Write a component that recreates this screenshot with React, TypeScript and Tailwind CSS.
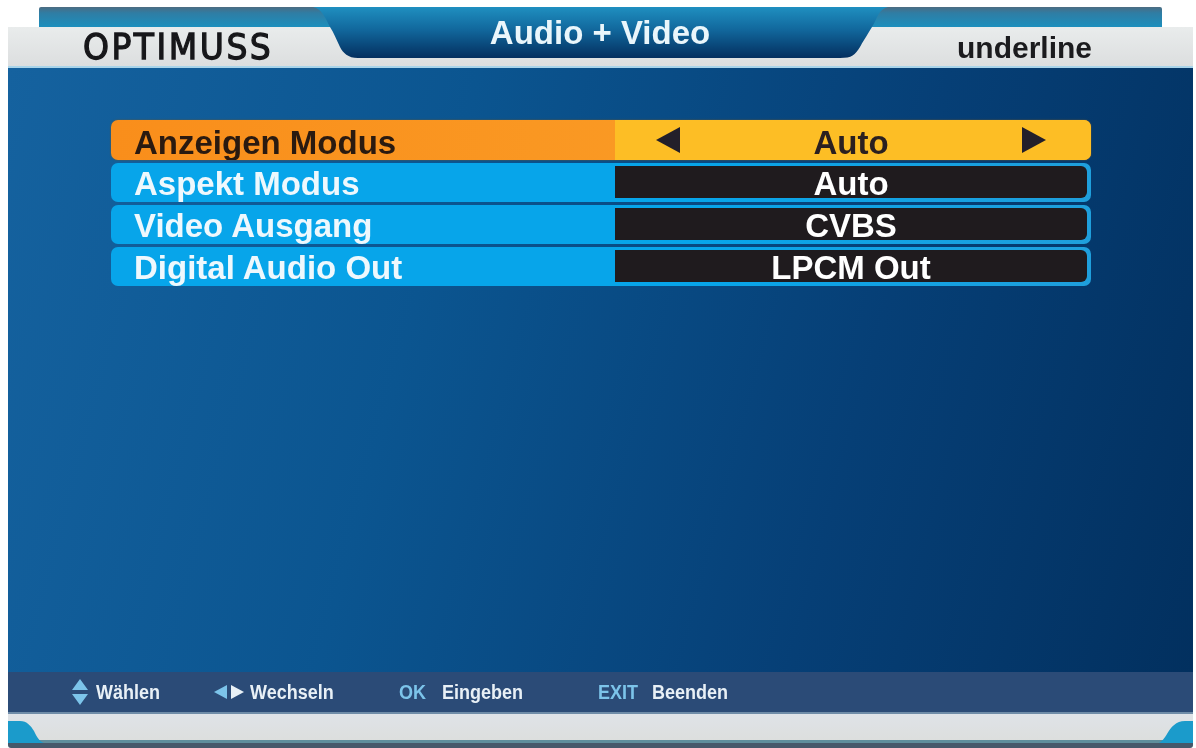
const rows = [
  { label: 'Anzeigen Modus', value: 'Auto', active: true },
  { label: 'Aspekt Modus', value: 'Auto', active: false },
  { label: 'Video Ausgang', value: 'CVBS', active: false },
  { label: 'Digital Audio Out', value: 'LPCM Out', active: false }
]

const MenuRow = ({ label, value, active }: { label: string; value: string; active: boolean }) => {
  if (active) {
    return (
      <div className="flex h-[40px] rounded-[7px] overflow-hidden bg-[linear-gradient(90deg,#f98e1b,#fba32b)] shadow-[0_0_2px_#6b5a30]">
        <div className="w-[504px] pl-[23px] pt-[5px] text-[33px] leading-[36px] font-bold text-[#2a1a10]">{label}</div>
        <div className="flex flex-1 items-center justify-between pl-[41px] pr-[45px] bg-[#fdbe25] text-[#2a2020]">
          <svg width="24" height="26" viewBox="0 0 24 26">
            <path d="M0 13 L24 0 V26 Z" fill="#231f2a" />
          </svg>
          <span className="text-[33px] leading-[36px] font-bold pt-[5px]">{value}</span>
          <svg width="24" height="26" viewBox="0 0 24 26">
            <path d="M24 13 L0 0 V26 Z" fill="#231f2a" />
          </svg>
        </div>
      </div>
    )
  }
  return (
    <div className="flex h-[39px] rounded-[7px] bg-[linear-gradient(90deg,#07a5ea_0%,#07a5ea_60%,#1f9fdc_100%)] overflow-hidden">
      <div className="w-[504px] pl-[23px] pt-[3px] text-[33px] leading-[36px] font-bold text-[#eef8fd]">{label}</div>
      <div className="flex flex-1 mt-[3px] mb-[4px] mr-[4px] rounded-r-[6px] bg-[#1f1b1e] items-center justify-center text-white">
        <span className="text-[33px] leading-[36px] font-bold pt-[4px]">{value}</span>
      </div>
    </div>
  )
}

export default function App() {
  return (
    <div className="w-[1196px] h-[748px] bg-white overflow-hidden pt-[7px] flex flex-col font-['Liberation_Sans',Arial,sans-serif] blur-[0.4px]">
      {/* header */}
      <div className="relative h-[61px] shrink-0">
        <div className="ml-[39px] mr-[34px] h-[20px] rounded-t-[2px] bg-[linear-gradient(180deg,#4c6c82_0%,#2f7da4_30%,#1c8fbd_100%)]" />
        <div className="ml-[8px] mr-[3px] h-[41px] flex justify-between items-center border-b-2 border-[#a9d4ea] bg-[linear-gradient(180deg,#e9ecec,#dcdedf)]">
          <div className="pl-[75px] text-[33px] leading-[36px] tracking-[2.5px] text-[#17171a] font-['DejaVu_Sans',sans-serif] [-webkit-text-stroke:1.2px_#17171a] [transform:scaleY(1.05)]">OPTIMUSS</div>
          <div className="pr-[101px] pt-[3px] text-[30px] leading-[30px] font-bold text-[#1b1b1e]">underline</div>
        </div>
        <div className="absolute left-[300px] top-0 w-[590px] h-[54px]">
          <svg className="absolute inset-0" width="590" height="54" viewBox="0 0 590 54">
            <defs>
              <linearGradient id="tab" x1="0" y1="0" x2="0" y2="1">
                <stop offset="0" stopColor="#1f8fc0" />
                <stop offset="0.45" stopColor="#11679c" />
                <stop offset="1" stopColor="#042f5f" />
              </linearGradient>
            </defs>
            <path d="M13 0 H588 C578 3 578 10 572 20 C566 30 562 36 560 40 C555 48 552 51 540 51 H58 C48 51 43 46 40 40 C36 32 34 26 30 20 C26 12 22 2 13 0 Z" fill="url(#tab)" />
          </svg>
          <div className="relative text-center pt-[9px] pl-[10px] text-[33px] leading-[34px] font-bold text-[#eaf6fb]">Audio + Video</div>
        </div>
      </div>

      {/* menu area */}
      <div className="ml-[8px] mr-[3px] h-[604px] shrink-0 pt-[52px] pl-[103px] pr-[102px] flex flex-col gap-[3px] bg-[linear-gradient(105deg,#15629f_0%,#0b5590_35%,#063f76_70%,#02305f_100%)]">
        {rows.map((row) => (
          <MenuRow key={row.label} label={row.label} value={row.value} active={row.active} />
        ))}
      </div>

      {/* footer hints */}
      <div className="ml-[8px] mr-[3px] h-[42px] shrink-0 flex items-center pl-[64px] bg-[#2b4b77] border-b-2 border-[#6f8ca8] text-[20px] font-bold text-[#e8f0f6]">
        <svg width="16" height="28" viewBox="0 0 16 28" className="mr-[8px]">
          <path d="M8 1 L16 12 H0 Z M8 27 L16 16 H0 Z" fill="#7cc4ea" />
        </svg>
        <span className="w-[64px] origin-left scale-x-[0.9]">Wählen</span>
        <svg width="30" height="14" viewBox="0 0 30 14" className="ml-[54px] mr-[6px]">
          <path d="M0 7 L13 0 V14 Z" fill="#7cc4ea" />
          <path d="M30 7 L17 0 V14 Z" fill="#e8f0f6" />
        </svg>
        <span className="w-[84px] origin-left scale-x-[0.9]">Wechseln</span>
        <span className="ml-[65px] w-[43px] origin-left scale-x-[0.9] text-[#7cc4ea]">OK</span>
        <span className="w-[80px] origin-left scale-x-[0.9]">Eingeben</span>
        <span className="ml-[76px] w-[54px] origin-left scale-x-[0.9] text-[#7cc4ea]">EXIT</span>
        <span className="origin-left scale-x-[0.9]">Beenden</span>
      </div>

      {/* bottom strip */}
      <div className="relative ml-[8px] mr-[3px] h-[29px] shrink-0 bg-[linear-gradient(180deg,#dfe3e8,#dcdedc)]">
        <div className="absolute left-0 right-0 bottom-0 h-[3px] bg-[#5f8e9c]" />
        <svg className="absolute left-0 bottom-0" width="36" height="22" viewBox="0 0 36 22">
          <path d="M0 0 H12 C19 0 23 5 26 10 C29 16 31 20 36 22 H0 Z" fill="#1b9bcb" />
        </svg>
        <svg className="absolute right-0 bottom-0" width="34" height="22" viewBox="0 0 34 22">
          <path d="M34 0 H26 C17 0 12 6 8 13 C5 18 3 20 0 22 H34 Z" fill="#1b9bcb" />
        </svg>
      </div>
      <div className="ml-[8px] mr-[3px] h-[5px] shrink-0 rounded-b-[3px] bg-[#46586a]" />
    </div>
  )
}
